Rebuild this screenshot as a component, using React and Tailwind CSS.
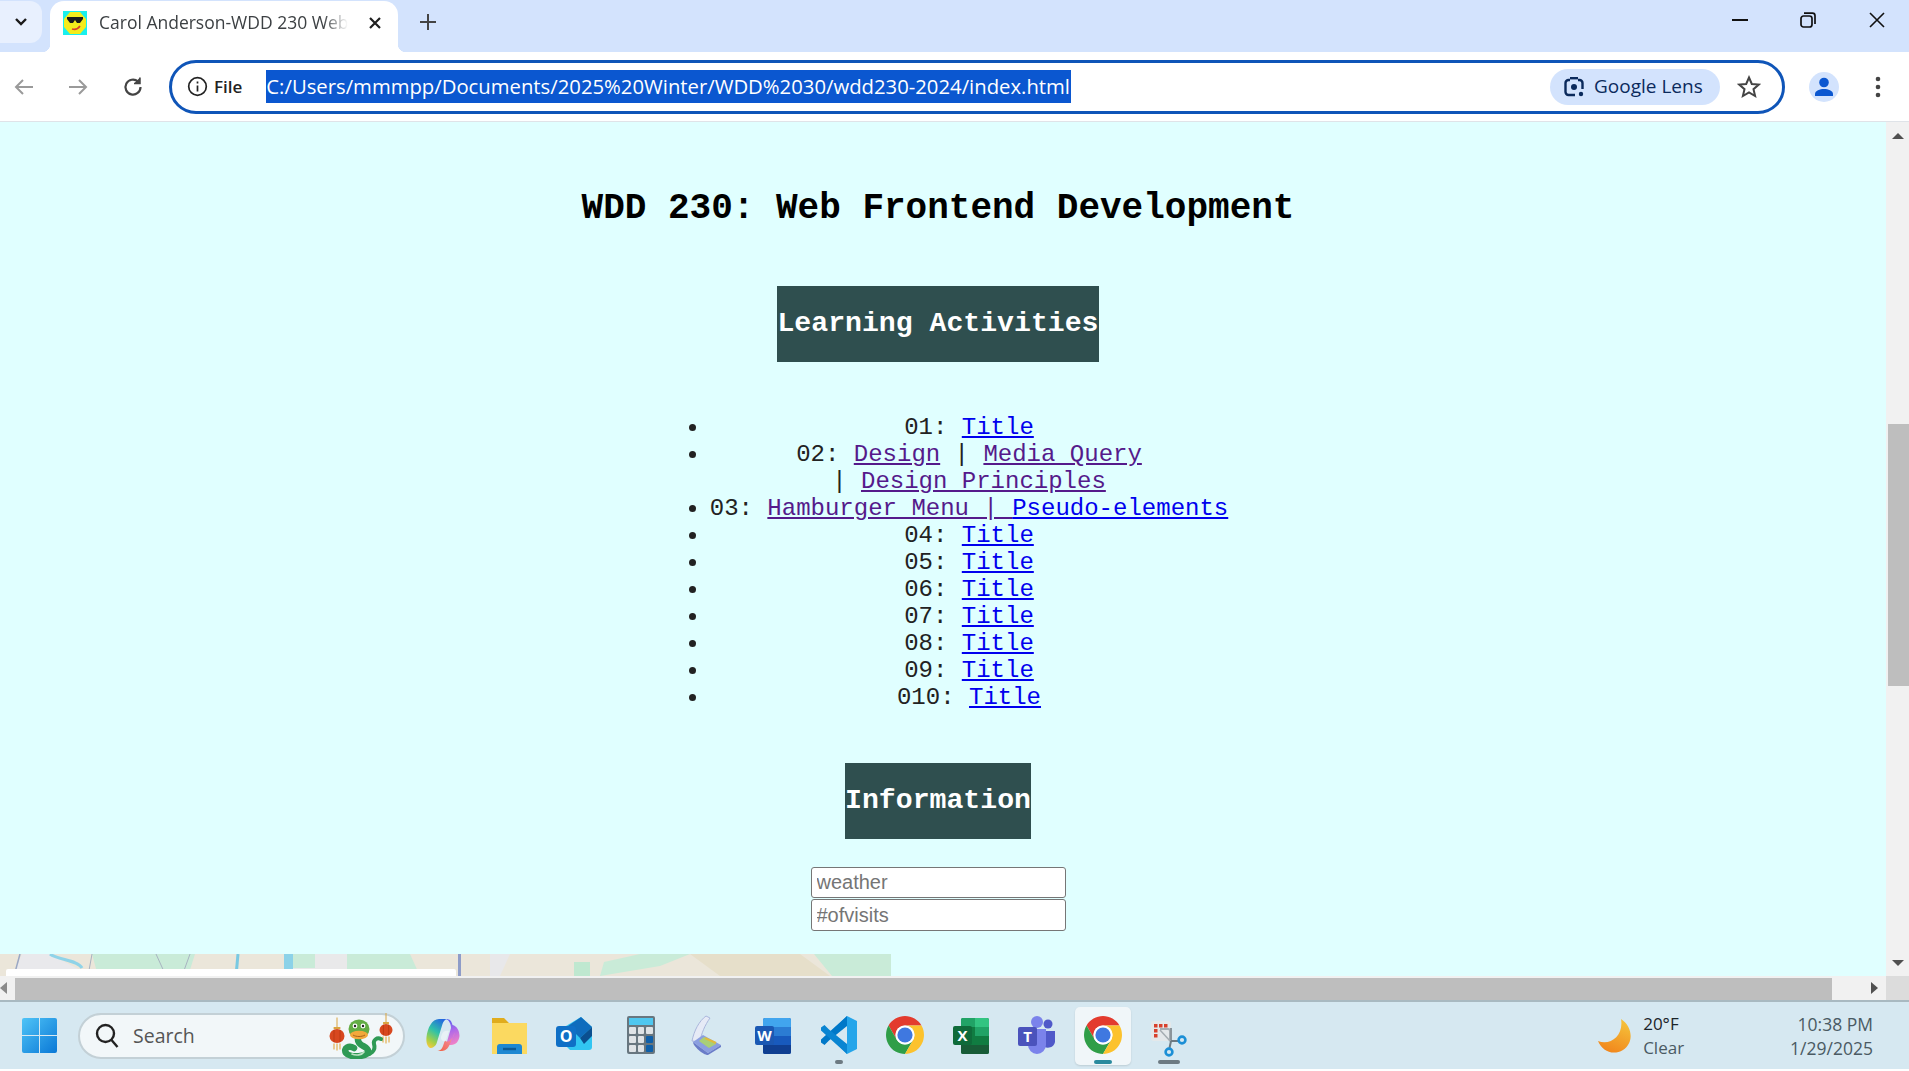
import React from "react";

const ui = { fontFamily: '"Open Sans", "Noto Sans", sans-serif' };

function Chrome({ size = 38 }) {
  return (
    <svg width={size} height={size} viewBox="4 4 40 40">
      <path d="M41.32 14A20 20 0 0 0 6.68 14L15.34 29A10 10 0 0 1 24 14Z" fill="#e33b2e" />
      <path d="M6.68 14A20 20 0 0 0 24 44L32.66 29A10 10 0 0 1 15.34 29Z" fill="#2f9e48" />
      <path d="M24 44A20 20 0 0 0 41.32 14H24A10 10 0 0 1 32.66 29Z" fill="#fcc22d" />
      <circle cx="24" cy="24" r="10" fill="#fff" />
      <circle cx="24" cy="24" r="8" fill="#3f78e0" />
    </svg>
  );
}

function Win() {
  return (
    <svg width="35" height="35" viewBox="0 0 35 35">
      <defs>
        <linearGradient id="w1" x1="0" y1="0" x2="1" y2="1">
          <stop offset="0" stopColor="#4fc4f7" />
          <stop offset="1" stopColor="#0a78d6" />
        </linearGradient>
      </defs>
      <path d="M2 0H17V17H0V2A2 2 0 0 1 2 0ZM18 0H33A2 2 0 0 1 35 2V17H18ZM0 18H17V35H2A2 2 0 0 1 0 33ZM18 18H35V33A2 2 0 0 1 33 35H18Z" fill="url(#w1)" />
    </svg>
  );
}

function Lantern({ cx, cy, r }) {
  return (
    <g>
      <path d={`M${cx} ${cy - r - 11}V${cy - r}`} stroke="#d9a441" strokeWidth="1" />
      <rect x={cx - r * 0.45} y={cy - r - 1.5} width={r * 0.9} height="2" fill="#d9a441" />
      <ellipse cx={cx} cy={cy} rx={r} ry={r * 0.92} fill="#d8481f" />
      <path d={`M${cx - r * 0.4} ${cy - r * 0.8}V${cy + r * 0.8}M${cx + r * 0.4} ${cy - r * 0.8}V${cy + r * 0.8}`} stroke="#b5360f" strokeWidth="0.7" />
      <path d={`M${cx - 3} ${cy + r}V${cy + r + 6}M${cx} ${cy + r}V${cy + r + 7}M${cx + 3} ${cy + r}V${cy + r + 6}`} stroke="#e3b04f" strokeWidth="1.2" />
    </g>
  );
}

function Snake() {
  return (
    <svg width="72" height="46" viewBox="0 0 72 46">
      <Lantern cx={10} cy={23} r={7.5} />
      <Lantern cx={59} cy={17} r={6.5} />
      <path d="M37 41C44 43 49 37 47 31C46 27 50 24 54 26" fill="none" stroke="#2f9a55" strokeWidth="4" strokeLinecap="round" />
      <path d="M31 26C30 33 41 33 41 38C41 44 23 45 19 40C16 35 22 32 27 35" fill="none" stroke="#2f9a55" strokeWidth="6.5" strokeLinecap="round" />
      <path d="M25 41C29 43 35 42 37 39" fill="none" stroke="#bfe3c4" strokeWidth="1.6" strokeLinecap="round" />
      <ellipse cx="32" cy="16" rx="10.5" ry="9.5" fill="#63ad45" />
      <ellipse cx="32" cy="22" rx="9" ry="4.2" fill="#f2a83b" />
      <path d="M26 22C29 24 35 24 38 22" stroke="#a9621a" strokeWidth="1" fill="none" />
      <circle cx="28" cy="13" r="2.4" fill="#fff" />
      <circle cx="36" cy="13" r="2.4" fill="#fff" />
      <circle cx="28" cy="13" r="1.2" fill="#222" />
      <circle cx="36" cy="13" r="1.2" fill="#222" />
    </svg>
  );
}

function Copilot() {
  return (
    <svg width="34" height="34" viewBox="0 0 34 34">
      <defs>
        <linearGradient id="c1" x1="0.7" y1="0" x2="0.2" y2="1">
          <stop offset="0" stopColor="#2468e0" />
          <stop offset="0.45" stopColor="#2fc2a8" />
          <stop offset="0.8" stopColor="#a8d045" />
          <stop offset="1" stopColor="#f3c83f" />
        </linearGradient>
        <linearGradient id="c2" x1="0.4" y1="0" x2="0.6" y2="1">
          <stop offset="0" stopColor="#5a5ff0" />
          <stop offset="0.45" stopColor="#b06ae8" />
          <stop offset="1" stopColor="#f583c4" />
        </linearGradient>
        <linearGradient id="c3" x1="0" y1="1" x2="1" y2="0">
          <stop offset="0" stopColor="#f0603d" />
          <stop offset="1" stopColor="#f79ac0" />
        </linearGradient>
      </defs>
      <path d="M13 1H22C19 1 17.5 3 16.5 6L11 24C10 28 7 30 4 30C1 28 0 24 0.5 19C1.5 10 6 1 13 1Z" fill="url(#c1)" />
      <path d="M20 1C24 1 25.5 3 26.5 7C31 8 33.5 13 33.5 18C33 23 30 27 25 27L20 27L25 10C25 6 23 2 20 1Z" fill="url(#c2)" />
      <path d="M29 14L23 28C21 32 18 33 15 33H10C14 33 16 31 17 28L19 22C21 26 27 22 29 14Z" fill="url(#c3)" />
      <path d="M16 16C17 13 20 12 23 13L19.5 23C17 24 14.5 22 15 19Z" fill="#e8f1f6" />
    </svg>
  );
}

function Folder() {
  return (
    <svg width="36" height="38" viewBox="0 0 36 38">
      <path d="M1 2H13L18 7H36V38H1Z" fill="#e0ac1d" />
      <path d="M1 7H36V38H1Z" fill="#fbd960" />
      <path d="M6 38V31A3 3 0 0 1 9 28H28A3 3 0 0 1 31 31V38Z" fill="#1e88d2" />
      <path d="M12 33H25" stroke="#0d5a96" strokeWidth="2.4" />
    </svg>
  );
}

function Outlook() {
  return (
    <svg width="38" height="38" viewBox="0 0 38 38">
      <path d="M10 10L25 1L36 11V31A3 3 0 0 1 33 34H14L10 30Z" fill="#31c5f2" />
      <path d="M12 10L25 1L36 11L24 22Z" fill="#0f6cbd" />
      <path d="M24 22L36 11V20L28 28Z" fill="#0b4f8f" />
      <rect x="0" y="10" width="20" height="21" rx="3" fill="#0f6fc6" />
      <text x="10" y="26" textAnchor="middle" fontSize="16" fontWeight="700" fill="#fff" fontFamily="Open Sans">O</text>
    </svg>
  );
}

function Calc() {
  const cell = "rounded-[1px]";
  return (
    <div className="flex h-[38px] w-[28px] flex-col gap-[2px] rounded-[2px] bg-[#68767f] p-[2px]">
      <div className="h-[7px] bg-[#4fc7ef]" />
      <div className="grid flex-1 grid-cols-3 gap-[2px]">
        {[0, 1, 2, 3, 4, 5, 6, 7, 8].map((i) => (
          <div key={i} className={i === 5 || i === 8 ? cell + " bg-[#0f5fa8]" : cell + " bg-[#dfe3e6]"} />
        ))}
      </div>
    </div>
  );
}

function Scanner() {
  return (
    <svg width="32" height="40" viewBox="0 0 32 40">
      <path d="M1 26C3 16 8 6 15 1L19 3C14 10 10 19 9 27Z" fill="#e6eaf6" stroke="#aab6dc" strokeWidth="1" />
      <path d="M2 27L12 20L30 30L17 38Z" fill="#8b9ee0" />
      <path d="M8 26L13 22L25 29L18 33Z" fill="#a9cf78" />
      <path d="M14 23L25 28" stroke="#e0bb3c" strokeWidth="2.2" />
      <path d="M2 27C2 31 12 40 17 40L30 32V30L17 38Z" fill="#6a7cc8" />
    </svg>
  );
}

function Word() {
  return (
    <svg width="36" height="38" viewBox="0 0 36 38">
      <rect x="8" y="2" width="28" height="36" rx="2" fill="#185abd" />
      <path d="M8 4A2 2 0 0 1 10 2H34A2 2 0 0 1 36 4V11H8Z" fill="#41a5ee" />
      <rect x="8" y="11" width="28" height="9" fill="#2b7cd3" />
      <path d="M8 29H36V36A2 2 0 0 1 34 38H10A2 2 0 0 1 8 36Z" fill="#103f91" />
      <rect x="0" y="10" width="19" height="19" rx="2" fill="#1b58b3" />
      <text x="9.5" y="25" textAnchor="middle" fontSize="15" fontWeight="700" fill="#fff" fontFamily="Open Sans">W</text>
    </svg>
  );
}

function Excel() {
  return (
    <svg width="36" height="38" viewBox="0 0 36 38">
      <rect x="8" y="2" width="28" height="36" rx="2" fill="#107c41" />
      <path d="M22 2H34A2 2 0 0 1 36 4V11H22Z" fill="#33c481" />
      <path d="M8 4A2 2 0 0 1 10 2H22V11H8Z" fill="#21a366" />
      <rect x="22" y="11" width="14" height="9" fill="#21a366" />
      <path d="M8 29H36V36A2 2 0 0 1 34 38H10A2 2 0 0 1 8 36Z" fill="#185c37" />
      <rect x="0" y="10" width="19" height="19" rx="2" fill="#0f6b3a" />
      <text x="9.5" y="25" textAnchor="middle" fontSize="15" fontWeight="700" fill="#fff" fontFamily="Open Sans">X</text>
    </svg>
  );
}

function VSCode() {
  return (
    <svg width="36" height="40" viewBox="0 0 36 40">
      <path d="M26 1L36 6V34L26 39L14 27L26 29V11L14 13Z" fill="#25a5ea" />
      <path d="M26 1L26 11L8 25.5L3.5 30L0 27.5V24.5L26 1Z" fill="#0078c8" />
      <path d="M26 39L26 29L8 14.5L3.5 10L0 12.5V15.5L26 39Z" fill="#0a85d2" />
    </svg>
  );
}

function Teams() {
  return (
    <svg width="38" height="38" viewBox="0 0 38 38">
      <circle cx="19" cy="6" r="6" fill="#7b83eb" />
      <circle cx="30" cy="8" r="4.5" fill="#5059c9" />
      <path d="M24 15H37V26A7 7 0 0 1 24 28Z" fill="#5059c9" />
      <path d="M9 13H28V29A9 9 0 0 1 10 29Z" fill="#7b83eb" />
      <rect x="0" y="11" width="19" height="19" rx="2" fill="#4b53bc" />
      <text x="9.5" y="26" textAnchor="middle" fontSize="15" fontWeight="700" fill="#fff" fontFamily="Open Sans">T</text>
    </svg>
  );
}

function Snip() {
  return (
    <svg width="38" height="46" viewBox="0 0 38 46">
      <rect x="1" y="9" width="20" height="20" rx="3" fill="#e4e8ea" />
      <path d="M4 12H7.5V15.5H4ZM9 12H12.5V15.5H9ZM14 12H17.5V15.5H14ZM4 17H7.5V20.5H4ZM4 22H7.5V25.5H4Z" fill="#d8402b" />
      <path d="M10 17H18A2 2 0 0 1 20 19V29" fill="none" stroke="#a5adb2" strokeWidth="2" />
      <path d="M21 16V29" stroke="#8a949b" strokeWidth="2" />
      <path d="M10 18L21 30" stroke="#a5adb2" strokeWidth="1.5" />
      <path d="M21 29L29 29" stroke="#6d7a82" strokeWidth="2" />
      <path d="M21 29L19.5 36" stroke="#6d7a82" strokeWidth="2" />
      <circle cx="32" cy="28" r="3.4" fill="none" stroke="#1c8fd6" strokeWidth="2.6" />
      <circle cx="19" cy="40" r="3.4" fill="none" stroke="#1c8fd6" strokeWidth="2.6" />
    </svg>
  );
}

function Moon() {
  return (
    <svg width="34" height="36" viewBox="0 0 34 36">
      <defs>
        <linearGradient id="m1" x1="0.7" y1="0" x2="0.3" y2="1">
          <stop offset="0" stopColor="#f5c23a" />
          <stop offset="1" stopColor="#f1851c" />
        </linearGradient>
      </defs>
      <path d="M23 1C35 9 36 25 25 32C15 38 4 33 0 23C12 28 26 18 23 1Z" fill="url(#m1)" />
    </svg>
  );
}

function Favicon() {
  return (
    <svg width="24" height="24" viewBox="0 0 24 24">
      <rect width="24" height="24" fill="#19f0ee" />
      <path d="M7 1H17L23 8V16L17 23H7L1 16V8Z" fill="#f4ec1c" />
      <path d="M4 6H20V8L17 12H14L12 9L10 12H7L4 8Z" fill="#1a1a1a" />
      <path d="M9 18C12 19 15 18 17 15" stroke="#d8402b" strokeWidth="1.6" fill="none" />
    </svg>
  );
}

function Lens() {
  return (
    <svg width="24" height="24" viewBox="0 0 24 24" fill="none" stroke="#0b2a5c" strokeWidth="2.4">
      <path d="M8 5H6.5A3 3 0 0 0 3.5 8V17A3 3 0 0 0 6.5 20H13" />
      <path d="M16 5H17.5A3 3 0 0 1 20.5 8V14" />
      <path d="M8 3.2H16" />
      <circle cx="12" cy="12" r="3" fill="#0b2a5c" stroke="none" />
      <circle cx="19" cy="19" r="2.2" fill="#0b2a5c" stroke="none" />
    </svg>
  );
}

function Map() {
  return (
    <div className="relative h-[22px] w-[891px] overflow-hidden">
      <svg width="891" height="22" viewBox="0 0 891 22" className="block">
        <rect width="891" height="22" fill="#ebe6da" />
        <path d="M22 0H50L80 16V22H12Z" fill="#e9e9ec" />
        <path d="M92 0H195L188 22H98Z" fill="#c9ebd8" />
        <path d="M50 0C58 6 78 6 82 14" stroke="#8fd3e8" strokeWidth="3" fill="none" />
        <path d="M20 0L14 22" stroke="#9aa7c4" strokeWidth="1.5" />
        <path d="M92 0L88 22M156 0L166 22M190 0L182 22" stroke="#a8b2c0" strokeWidth="1" />
        <path d="M238 0L236 22" stroke="#79c9e2" strokeWidth="3" />
        <rect x="284" y="0" width="9" height="22" fill="#8cd2e8" />
        <rect x="293" y="0" width="54" height="22" fill="#e9e9ea" />
        <rect x="293" y="0" width="22" height="14" fill="#c9ebd8" />
        <path d="M347 0H410L420 22H347Z" fill="#c9ebd8" />
        <rect x="458" y="0" width="3" height="22" fill="#8e9cc8" />
        <path d="M490 0H510L500 22H490Z" fill="#e8e8ea" />
        <rect x="574" y="8" width="16" height="14" fill="#bfe8d0" />
        <path d="M604 8L640 0H690L660 12L600 22Z" fill="#c9ebd8" />
        <path d="M690 0H800L830 22H720Z" fill="#e6dfca" />
        <path d="M814 0H891V22H832Z" fill="#c9ebd8" />
      </svg>
      <div className="absolute bottom-0 left-[6px] h-[7px] w-[450px] rounded-t-[2px] bg-white" />
    </div>
  );
}

function Row({ n, children }) {
  return (
    <li className="text-center">
      {n}: {children}
    </li>
  );
}

const link = "text-[#0000ee] underline";
const visited = "text-[#551a8b] underline";

function Title() {
  return <a className={link}>Title</a>;
}

function Pipe() {
  return <span>{"|"}</span>;
}

function Page() {
  return (
    <div className="flex min-w-0 flex-1 flex-col">
      <div className="h-[854px] overflow-hidden bg-[#e0ffff]">
        <div className="flex h-[832px] w-[1876px] flex-col items-center pt-[66px]" style={{ fontFamily: '"Liberation Mono", monospace' }}>
          <h1 className="text-[36px] font-bold leading-[41px] text-black">WDD 230: Web Frontend Development</h1>
          <h2 className="mt-[57px] flex h-[76px] items-center bg-[#2f4f4f] pt-[1px] text-[28.16px] font-bold text-white">Learning Activities</h2>
          <ul className="ml-[22px] mt-[52px] w-[560px] list-disc pl-[40px] text-[24px] leading-[27px] text-[#222]">
            <Row n="01"><Title /></Row>
            <Row n="02">
              <a className={visited}>Design</a> <Pipe /> <a className={visited}>Media&nbsp;Query</a> <br /><Pipe />&nbsp;<a className={visited}>Design&nbsp;Principles</a>
            </Row>
            <Row n="03">
              <a className={visited}>Hamburger Menu&nbsp;|&nbsp;</a><a className={link}>Pseudo-elements</a>
            </Row>
            <Row n="04"><Title /></Row>
            <Row n="05"><Title /></Row>
            <Row n="06"><Title /></Row>
            <Row n="07"><Title /></Row>
            <Row n="08"><Title /></Row>
            <Row n="09"><Title /></Row>
            <Row n="010"><Title /></Row>
          </ul>
          <h2 className="mt-[52px] flex h-[76px] items-center bg-[#2f4f4f] pt-[1px] text-[28.16px] font-bold text-white">Information</h2>
          <div className="mt-[28px] flex flex-col gap-px" style={{ fontFamily: '"Liberation Sans", sans-serif' }}>
            <input readOnly placeholder="weather" className="h-[31px] w-[255px] rounded-[3px] border border-[#767676] bg-white px-[5px] text-[20px] placeholder:text-[#757575]" />
            <input readOnly placeholder="#ofvisits" className="h-[32px] w-[255px] rounded-[3px] border border-[#767676] bg-white px-[5px] text-[20px] placeholder:text-[#757575]" />
          </div>
        </div>
        <Map />
      </div>
      <div className="flex h-[24px] items-center bg-[#f1f1f1]">
        <div className="flex h-full w-[15px] items-center justify-start">
          <div className="h-0 w-0 border-y-[6px] border-r-[7px] border-y-transparent border-r-[#8a8a8a]" />
        </div>
        <div className="mt-px h-[22px] w-[1817px] bg-[#bebebe]" />
        <div className="flex h-full flex-1 items-center justify-end pr-[8px]">
          <div className="h-0 w-0 border-y-[6px] border-l-[7px] border-y-transparent border-l-[#505050]" />
        </div>
      </div>
    </div>
  );
}

function VScroll() {
  return (
    <div className="flex w-[23px] flex-col bg-[#f1f1f1]">
      <div className="flex h-[854px] flex-col">
        <div className="flex h-[28px] items-center justify-center">
          <div className="h-0 w-0 border-x-[6px] border-b-[6px] border-x-transparent border-b-[#505050]" />
        </div>
        <div className="ml-[2px] mt-[274px] h-[262px] flex-none bg-[#bebebe]" />
        <div className="flex-1" />
        <div className="flex h-[26px] items-center justify-center">
          <div className="h-0 w-0 border-x-[6px] border-t-[6px] border-x-transparent border-t-[#505050]" />
        </div>
      </div>
      <div className="h-[24px] bg-[#dcdcdc]" />
    </div>
  );
}

function TaskIcon({ children, bar, active }) {
  return (
    <div className="relative flex h-[58px] w-[66px] items-center justify-center">
      {active && <div className="absolute inset-y-0 left-[5px] w-[56px] rounded-[5px] bg-[#f0f6f9] shadow-[0_1px_2px_rgba(0,0,0,0.12)]" />}
      <div className="relative mt-[-2px]">{children}</div>
      {bar === "dot" && <div className="absolute bottom-[1px] h-[4px] w-[8px] rounded-full bg-[#6d7a82]" />}
      {bar === "long" && <div className="absolute bottom-[1px] h-[4px] w-[18px] rounded-full bg-[#2a8a9e]" />}
      {bar === "wide" && <div className="absolute bottom-[1px] h-[4px] w-[22px] rounded-full bg-[#6d7a82]" />}
    </div>
  );
}

function Taskbar() {
  return (
    <div className="flex h-[69px] items-center border-t-2 border-[#a9b9c1] bg-[#d6e8f1] pl-[22px] pr-[36px]" style={ui}>
      <Win />
      <div className="ml-[21px] flex h-[46px] w-[327px] items-center rounded-full border-2 border-[#c3d0d6] bg-[#f2f7f9] pl-[14px] pr-[4px]">
        <svg width="26" height="28" viewBox="0 0 26 28" fill="none" stroke="#222" strokeWidth="2.4">
          <circle cx="11.5" cy="11.5" r="8.5" />
          <path d="M17.5 18L23.5 25" />
        </svg>
        <span className="ml-[13px] flex-1 text-[19.5px] text-[#555]">Search</span>
        <Snake />
      </div>
      <div className="ml-[5px] flex items-center">
        <TaskIcon><Copilot /></TaskIcon>
        <TaskIcon><Folder /></TaskIcon>
        <TaskIcon><Outlook /></TaskIcon>
        <TaskIcon><Calc /></TaskIcon>
        <TaskIcon><Scanner /></TaskIcon>
        <TaskIcon><Word /></TaskIcon>
        <TaskIcon bar="dot"><VSCode /></TaskIcon>
        <TaskIcon><Chrome /></TaskIcon>
        <TaskIcon><Excel /></TaskIcon>
        <TaskIcon><Teams /></TaskIcon>
        <TaskIcon active bar="long"><Chrome /></TaskIcon>
        <TaskIcon bar="wide"><Snip /></TaskIcon>
      </div>
      <div className="flex-1" />
      <div className="mr-[11px]"><Moon /></div>
      <div className="flex flex-col text-[17px] leading-[24px]">
        <span className="text-[#1b2429]">20°F</span>
        <span className="text-[#4a5a63]">Clear</span>
      </div>
      <div className="ml-[106px] flex flex-col items-end text-[17.5px] leading-[24px] text-[#4a5a63]">
        <span>10:38 PM</span>
        <span>1/29/2025</span>
      </div>
    </div>
  );
}

export default function App() {
  return (
    <div className="flex h-[1071px] w-[1909px] flex-col overflow-hidden bg-white" style={ui}>
      <div className="flex h-[52px] items-end bg-[#d3e3fd]">
        <div className="mb-[9px] ml-0 flex h-[42px] w-[42px] items-center justify-center rounded-br-[12px] rounded-tr-[12px] bg-[#e8f0fe]">
          <svg width="14" height="10" viewBox="0 0 14 10" fill="none" stroke="#1a1a1a" strokeWidth="2.4">
            <path d="M2 2L7 7L12 2" />
          </svg>
        </div>
        <div className="relative ml-[8px] flex h-[51px] w-[348px] items-center rounded-t-[14px] bg-white pb-[8px] pl-[13px]">
          <div className="absolute bottom-0 left-[-8px] h-[8px] w-[8px] bg-[radial-gradient(circle_at_0_0,#d3e3fd_8px,#fff_8.5px)]" />
          <div className="absolute bottom-0 right-[-8px] h-[8px] w-[8px] bg-[radial-gradient(circle_at_100%_0,#d3e3fd_8px,#fff_8.5px)]" />
          <Favicon />
          <span className="ml-[12px] w-[249px] overflow-hidden whitespace-nowrap text-[17.5px] text-[#3c4043] [mask-image:linear-gradient(to_right,#000_90%,transparent)]">Carol Anderson-WDD 230 Web</span>
          <svg className="ml-[20px]" width="14" height="14" viewBox="0 0 14 14" stroke="#1f1f1f" strokeWidth="2.2">
            <path d="M2 2L12 12M12 2L2 12" />
          </svg>
        </div>
        <svg className="mb-[21px] ml-[21px]" width="18" height="18" viewBox="0 0 18 18" stroke="#444" strokeWidth="2">
          <path d="M9 1V17M1 9H17" />
        </svg>
        <div className="flex-1" />
        <div className="mb-[24px] flex items-center">
          <svg width="16" height="4" viewBox="0 0 16 4"><rect width="16" height="2" y="1" fill="#111" /></svg>
          <svg className="ml-[52px]" width="16" height="16" viewBox="0 0 16 16" fill="none" stroke="#111" strokeWidth="1.7">
            <rect x="1" y="4" width="11" height="11" rx="2.5" />
            <path d="M4 1.2H12.5A2.5 2.5 0 0 1 15 3.7V12" />
          </svg>
          <svg className="ml-[53px] mr-[24px]" width="16" height="16" viewBox="0 0 16 16" stroke="#111" strokeWidth="1.6">
            <path d="M1 1L15 15M15 1L1 15" />
          </svg>
        </div>
      </div>
      <div className="flex h-[70px] items-center border-b border-[#dfe3e8] bg-white">
        <div className="flex w-[169px] items-center">
          <svg className="ml-[14px]" width="20" height="20" viewBox="0 0 20 20" fill="none" stroke="#9a9a9a" strokeWidth="2">
            <path d="M19 10H2M9 3L2 10L9 17" />
          </svg>
          <svg className="ml-[34px]" width="20" height="20" viewBox="0 0 20 20" fill="none" stroke="#9a9a9a" strokeWidth="2">
            <path d="M1 10H18M11 3L18 10L11 17" />
          </svg>
          <svg className="ml-[34px]" width="22" height="22" viewBox="0 0 22 22" fill="none" stroke="#444" strokeWidth="2.2">
            <path d="M18.5 11A7.5 7.5 0 1 1 16 5.5" />
            <path d="M18 1.5V7.5H12" fill="#444" strokeWidth="1.5" />
          </svg>
        </div>
        <div className="flex h-[54px] w-[1616px] items-center rounded-full border-[3px] border-[#0f55b8] bg-white pl-[15px] pr-[21px]">
          <svg width="21" height="21" viewBox="0 0 21 21" fill="none" stroke="#222" strokeWidth="1.7">
            <circle cx="10.5" cy="10.5" r="8.8" />
            <path d="M10.5 9.5V15.5M10.5 5.5V7.5" />
          </svg>
          <span className="ml-[6px] text-[17px] font-semibold text-[#222]">File</span>
          <span className="ml-[24px] flex h-[33px] w-[805px] items-center overflow-hidden whitespace-nowrap bg-[#0b57d0] text-[20.3px] text-white">C:/Users/mmmpp/Documents/2025%20Winter/WDD%2030/wdd230-2024/index.html</span>
          <div className="flex-1" />
          <div className="flex h-[36px] w-[170px] items-center rounded-full bg-[#d3e3fd] pl-[12px]">
            <Lens />
            <span className="ml-[8px] text-[19px] font-medium text-[#0b2a5c]">Google Lens</span>
          </div>
          <svg className="ml-[17px]" width="24" height="24" viewBox="0 0 24 24" fill="none" stroke="#444" strokeWidth="2">
            <path d="M12 2.5L14.8 9L21.8 9.6L16.5 14.2L18.1 21L12 17.4L5.9 21L7.5 14.2L2.2 9.6L9.2 9Z" />
          </svg>
        </div>
        <div className="ml-[24px] flex h-[30px] w-[30px] items-center justify-center rounded-full bg-[#d3e3fd]">
          <svg width="22" height="22" viewBox="0 0 22 22" fill="#0b57d0">
            <circle cx="11" cy="6.5" r="4.8" />
            <path d="M2 20V18C2 14.5 7 13 11 13S20 14.5 20 18V20Z" />
          </svg>
        </div>
        <svg className="ml-[36px]" width="6" height="22" viewBox="0 0 6 22" fill="#444">
          <circle cx="3" cy="3" r="2.3" />
          <circle cx="3" cy="11" r="2.3" />
          <circle cx="3" cy="19" r="2.3" />
        </svg>
      </div>
      <div className="flex h-[878px] flex-none">
        <Page />
        <VScroll />
      </div>
      <Taskbar />
    </div>
  );
}
